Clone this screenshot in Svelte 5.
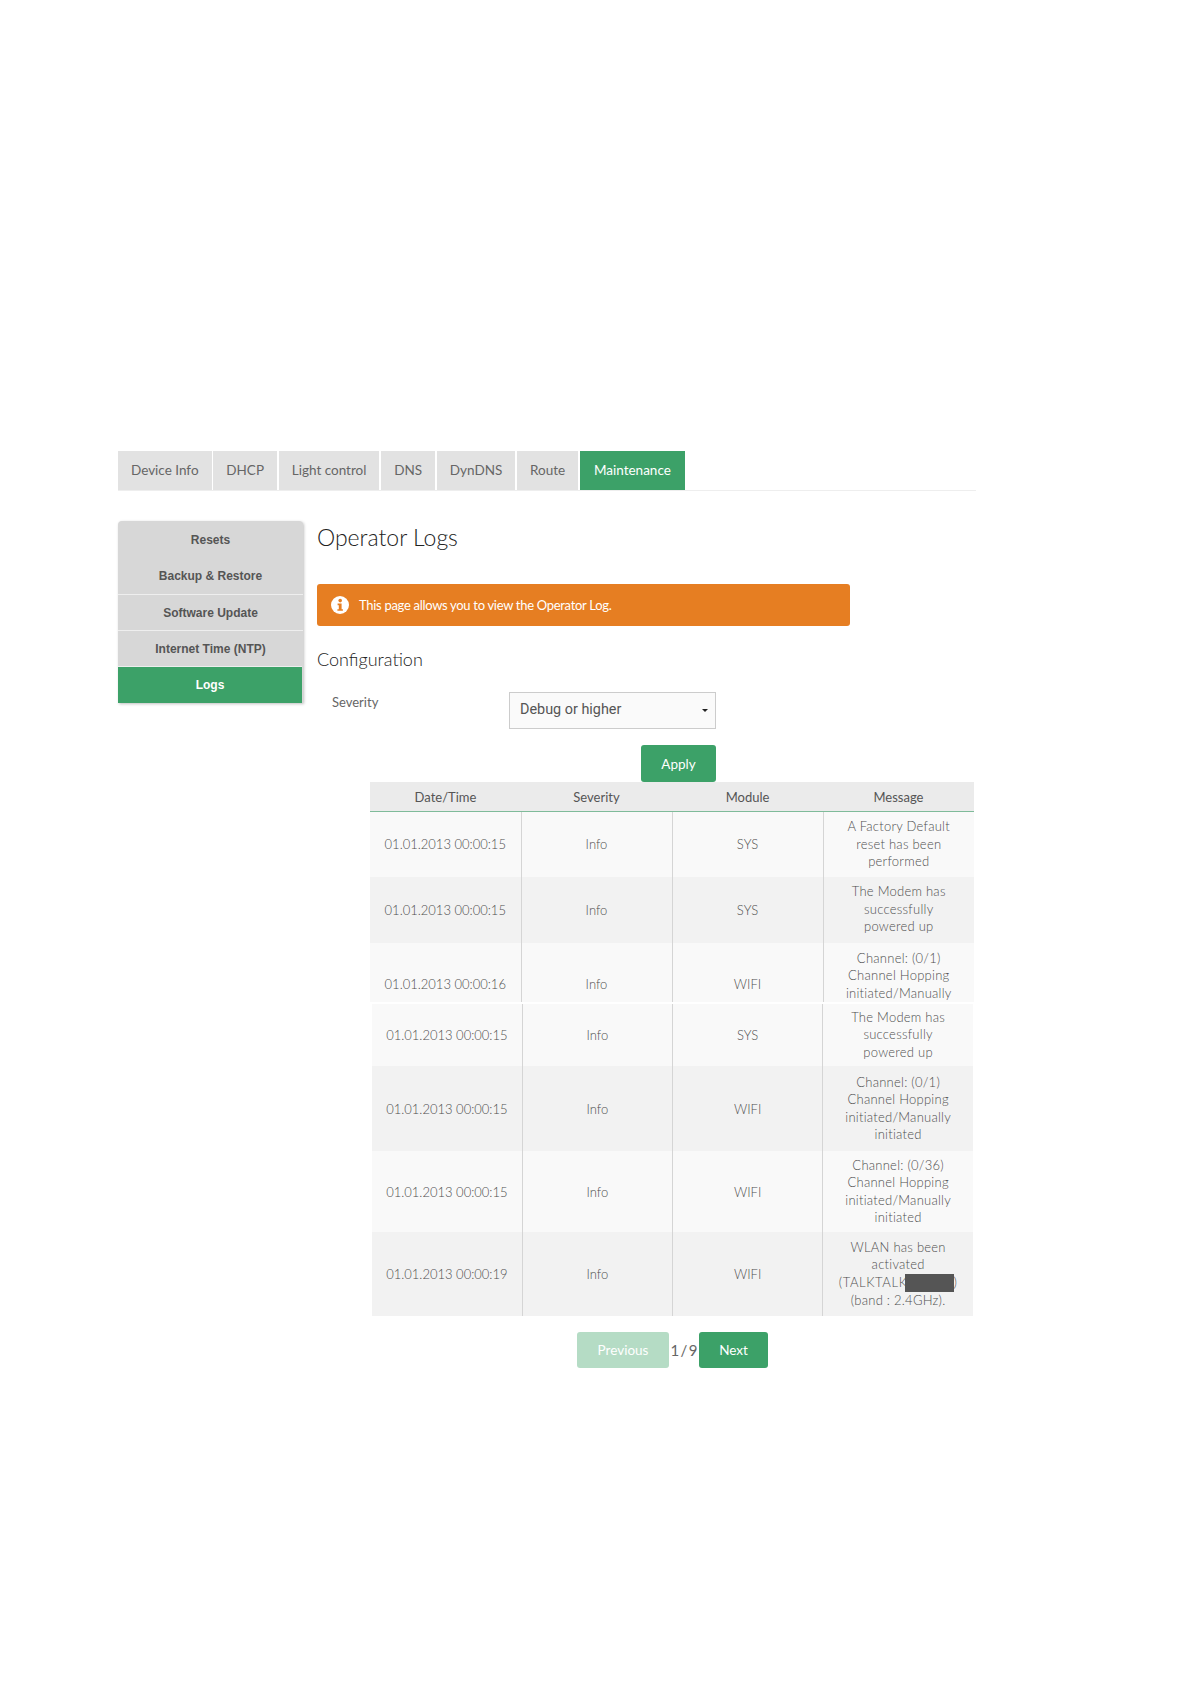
<script>
  const tabs = ['Device Info', 'DHCP', 'Light control', 'DNS', 'DynDNS', 'Route', 'Maintenance'];
  const menu = ['Resets', 'Backup & Restore', 'Software Update', 'Internet Time (NTP)', 'Logs'];

  const firstPage = [
    { date: '01.01.2013 00:00:15', module: 'SYS', h: 65, msg: ['A Factory Default', 'reset has been', 'performed'] },
    { date: '01.01.2013 00:00:15', module: 'SYS', h: 66, msg: ['The Modem has', 'successfully', 'powered up'] },
    { date: '01.01.2013 00:00:16', module: 'WIFI', h: 59, cut: true, msg: ['Channel: (0/1)', 'Channel Hopping', 'initiated/Manually'] }
  ];
  const secondPage = [
    { date: '01.01.2013 00:00:15', module: 'SYS', h: 62, msg: ['The Modem has', 'successfully', 'powered up'] },
    { date: '01.01.2013 00:00:15', module: 'WIFI', h: 85, msg: ['Channel: (0/1)', 'Channel Hopping', 'initiated/Manually', 'initiated'] },
    { date: '01.01.2013 00:00:15', module: 'WIFI', h: 81, msg: ['Channel: (0/36)', 'Channel Hopping', 'initiated/Manually', 'initiated'] }
  ];
</script>

<div class="page">
  <ul class="tabs">
    {#each tabs as tab}
      <li class:active={tab === 'Maintenance'}>{tab}</li>
    {/each}
  </ul>

  <div class="content">
    <nav class="side">
      {#each menu as item, i}
        <div class="side-item" class:active={item === 'Logs'} class:first={i < 2}>{item}</div>
      {/each}
    </nav>

    <main>
      <h1>Operator Logs</h1>

      <div class="alert">
        <svg width="18" height="18" viewBox="0 0 18 18">
          <circle cx="9" cy="9" r="9" fill="#fff" />
          <circle cx="9.2" cy="4.6" r="1.8" fill="#e67e22" />
          <path d="M6.6 7.6h4v5.6h1.3v1.6H6.4v-1.6h1.4V9.2H6.6z" fill="#e67e22" />
        </svg>
        <span>This page allows you to view the Operator Log.</span>
      </div>

      <h2>Configuration</h2>

      <div class="field">
        <label for="severity">Severity</label>
        <div class="select-wrap">
          <select id="severity">
            <option>Debug or higher</option>
          </select>
          <i class="caret"></i>
        </div>
      </div>

      <div class="apply-row">
        <button class="btn apply">Apply</button>
      </div>

      <table class="logs">
        <thead>
          <tr>
            <th>Date/Time</th>
            <th>Severity</th>
            <th>Module</th>
            <th>Message</th>
          </tr>
        </thead>
        <tbody>
          {#each firstPage as row}
            <tr style:height="{row.h}px" class:cut={row.cut}>
              <td>{row.date}</td>
              <td>Info</td>
              <td>{row.module}</td>
              <td class="msg">
                {#each row.msg as line}<div>{line}</div>{/each}
              </td>
            </tr>
          {/each}
        </tbody>
      </table>

      <table class="logs second">
        <tbody>
          {#each secondPage as row}
            <tr style:height="{row.h}px">
              <td>{row.date}</td>
              <td>Info</td>
              <td>{row.module}</td>
              <td class="msg">
                {#each row.msg as line}<div>{line}</div>{/each}
              </td>
            </tr>
          {/each}
          <tr style:height="84px">
            <td>01.01.2013 00:00:19</td>
            <td>Info</td>
            <td>WIFI</td>
            <td class="msg">
              <div>WLAN has been</div>
              <div>activated</div>
              <div class="ssid">(TALKTALK<span class="redact"></span>)</div>
              <div>(band : 2.4GHz).</div>
            </td>
          </tr>
        </tbody>
      </table>

      <div class="pager">
        <button class="btn prev">Previous</button>
        <span class="count">1 / 9</span>
        <button class="btn next">Next</button>
      </div>
    </main>
  </div>
</div>

<style>
  :global(body) {
    margin: 0;
    background: #fff;
  }
  .page {
    padding: 451px 0 0 118px;
    width: 858px;
    height: 1233px;
    font-family: Lato, "Open Sans", sans-serif;
    color: #666;
  }
  .tabs {
    display: flex;
    list-style: none;
    margin: 0;
    padding: 0;
    height: 39px;
    border-bottom: 1px solid #eee;
  }
  .tabs li {
    padding: 0 13px;
    margin-right: 1.75px;
    background: #e2e2e2;
    font-size: 13.5px;
    line-height: 39px;
    color: #666;
  }
  .tabs li.active {
    padding: 0 14px;
    background: #3ca168;
    color: #fff;
    margin-right: 0;
  }

  .content {
    display: flex;
    margin-top: 30px;
  }
  .side {
    width: 185px;
    flex: none;
    align-self: flex-start;
    background: #d7d7d7;
    border-radius: 4px 4px 0 0;
    box-shadow: 1px 1px 3px rgba(0, 0, 0, 0.25);
    overflow: hidden;
    font-family: "Liberation Sans", Arial, sans-serif;
  }
  .side-item {
    height: 35.3px;
    line-height: 37px;
    text-align: center;
    font-size: 12px;
    font-weight: bold;
    color: #555;
    border-top: 1px solid #eee;
  }
  .side-item.first {
    border-top-color: transparent;
  }
  .side-item.active {
    background: #3ca168;
    color: #fff;
    margin-right: 1px;
    height: 36px;
  }

  main {
    margin-left: 14px;
    width: 657px;
  }
  h1 {
    margin: 0;
    font-size: 23px;
    font-weight: 300;
    line-height: 32px;
    color: #222;
  }
  .alert {
    display: flex;
    align-items: center;
    gap: 10px;
    width: 533px;
    height: 42px;
    margin-top: 31px;
    padding-left: 14px;
    box-sizing: border-box;
    background: #e67e22;
    border-radius: 3px;
    font-size: 13px;
    letter-spacing: -0.3px;
    color: #fff;
  }
  h2 {
    margin: 22px 0 0;
    font-size: 18px;
    font-weight: 300;
    line-height: 22px;
    color: #222;
  }
  .field {
    display: flex;
    margin-top: 22px;
    padding-left: 15px;
  }
  .field label {
    width: 177px;
    font-size: 13px;
    line-height: 20px;
    color: #666;
  }
  .select-wrap {
    position: relative;
    width: 207px;
    height: 37px;
  }
  select {
    appearance: none;
    width: 100%;
    height: 100%;
    padding: 0 10px 2px;
    border: 1px solid #ccc;
    border-radius: 0;
    background: #fafafa;
    font-family: Roboto, sans-serif;
    font-size: 14.4px;
    color: #555;
  }
  .caret {
    position: absolute;
    right: 8px;
    top: 17px;
    border: 3px solid transparent;
    border-top-color: #222;
    border-bottom: 0;
  }

  .btn {
    border: 0;
    border-radius: 3px;
    background: #3ca168;
    color: #fff;
    font-family: inherit;
    font-size: 13.5px;
    height: 36px;
    padding: 0;
  }
  .apply-row {
    display: flex;
    justify-content: flex-end;
    width: 399px;
    margin-top: 16px;
  }
  .apply {
    width: 75px;
    height: 37px;
  }

  .logs {
    margin-left: 53px;
    width: 604px;
    border-collapse: collapse;
    table-layout: fixed;
    font-size: 13px;
    font-weight: 300;
    color: #4f4f4f;
    text-align: center;
  }
  .logs th {
    height: 29px;
    padding: 0;
    background: #ebebeb;
    border-bottom: 1px solid #7fbb9a;
    font-weight: 400;
    color: #555;
  }
  .logs td {
    padding: 0;
    vertical-align: middle;
    border-left: 1px solid #d5d5d5;
  }
  .logs td:first-child {
    border-left: 0;
  }
  .logs tbody tr:nth-child(odd) {
    background: #f9f9f9;
  }
  .logs tbody tr:nth-child(even) {
    background: #f2f2f2;
  }
  .msg {
    line-height: 17.5px;
    letter-spacing: 0.25px;
  }
  .cut td:not(.msg) {
    vertical-align: bottom;
    padding-bottom: 10px;
  }
  .logs .cut .msg {
    vertical-align: top;
    padding-top: 7px;
  }
  .second {
    margin-top: 2px;
    margin-left: 55px;
    width: 601px;
  }
  .ssid {
    white-space: nowrap;
    letter-spacing: 0.6px;
  }
  .redact {
    display: inline-block;
    width: 49px;
    height: 18px;
    margin-left: -3px;
    vertical-align: top;
    background: #555;
  }

  .pager {
    display: flex;
    align-items: center;
    margin: 16px 0 0 260px;
  }
  .prev {
    width: 92px;
    background: #b5dcc5;
  }
  .count {
    width: 30px;
    text-align: center;
    white-space: nowrap;
    font-size: 15px;
    word-spacing: -2.5px;
    color: #666;
  }
  .next {
    width: 69px;
  }
</style>
